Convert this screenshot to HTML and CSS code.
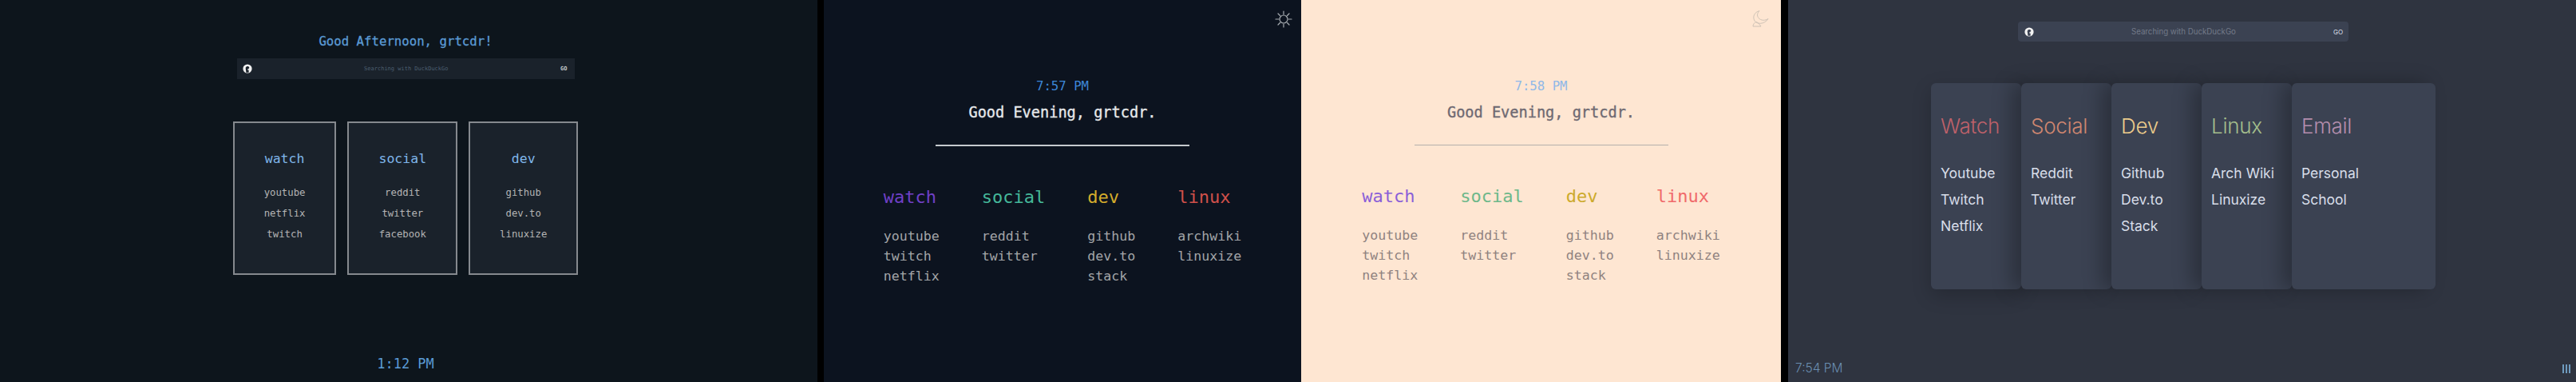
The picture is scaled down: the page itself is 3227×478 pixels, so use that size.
FILE: index.html
```html
<html>
<head>
  <title>Startpages</title>
  <link rel="stylesheet" href="styles.css">
</head>
<body>
  <section class="term">
    <h1 class="term-greeting">Good Afternoon, grtcdr!</h1>
    <div class="search term-search">
      <svg class="duck" viewBox="0 0 12 12"><circle cx="6" cy="6" r="5.6" fill="#f2f2f2"/><path d="M4.2 10.8 C4.6 8.4 3.4 6.6 3.8 4.6 C4.2 3 6.4 2.4 7.6 3.4 C8.8 4.4 8.2 5.6 7 6 C7.6 7.4 7.8 9.2 7.6 10.8 Z" fill="#1a222b"/><path d="M6 6.4 L8.6 6.2 L8.4 7.4 L6.2 7.6 Z" fill="#f2f2f2"/></svg>
      <span class="search-text">Searching with DuckDuckGo</span>
      <span class="search-go">GO</span>
    </div>
    <div class="term-cards">
      <div class="term-card">
        <h2>watch</h2>
        <a>youtube</a><a>netflix</a><a>twitch</a>
      </div>
      <div class="term-card">
        <h2>social</h2>
        <a>reddit</a><a>twitter</a><a>facebook</a>
      </div>
      <div class="term-card">
        <h2>dev</h2>
        <a>github</a><a>dev.to</a><a>linuxize</a>
      </div>
    </div>
    <div class="term-clock">1:12 PM</div>
  </section>

  <section class="mono mono-dark">
    <svg class="toggle sun" viewBox="0 0 24 24" fill="none" stroke-width="1.2" stroke-linecap="round">
      <circle cx="12" cy="12" r="5"/>
      <path d="M12 2v4M12 18v4M2 12h4M18 12h4M5 5l2.5 2.5M16.5 16.5L19 19M5 19l2.5-2.5M16.5 7.5L19 5"/>
    </svg>
    <div class="mono-clock">7:57 PM</div>
    <h1 class="mono-greeting">Good Evening, grtcdr.</h1>
    <hr class="mono-rule">
    <div class="mono-cols">
      <div class="mono-col">
        <h2 class="c-watch">watch</h2>
        <a>youtube</a><a>twitch</a><a>netflix</a>
      </div>
      <div class="mono-col">
        <h2 class="c-social">social</h2>
        <a>reddit</a><a>twitter</a>
      </div>
      <div class="mono-col">
        <h2 class="c-dev">dev</h2>
        <a>github</a><a>dev.to</a><a>stack</a>
      </div>
      <div class="mono-col">
        <h2 class="c-linux">linux</h2>
        <a>archwiki</a><a>linuxize</a>
      </div>
    </div>
  </section>

  <section class="mono mono-light">
    <svg class="toggle moon" viewBox="0 0 21 21" fill="none" stroke-width="0.9" stroke-linejoin="round">
      <path d="M9 0.7 C3 2 0 8 3 13 C6 17.5 15 18 20 10.5 C16 13 11 13 8 9.5 C5.5 6.5 6.5 3 9 0.7 Z"/>
      <path d="M1 20 C1 17.5 3 15 5 14.5 C7 15 9 17 11 20 Z"/>
    </svg>
    <div class="mono-clock">7:58 PM</div>
    <h1 class="mono-greeting">Good Evening, grtcdr.</h1>
    <hr class="mono-rule">
    <div class="mono-cols">
      <div class="mono-col">
        <h2 class="c-watch">watch</h2>
        <a>youtube</a><a>twitch</a><a>netflix</a>
      </div>
      <div class="mono-col">
        <h2 class="c-social">social</h2>
        <a>reddit</a><a>twitter</a>
      </div>
      <div class="mono-col">
        <h2 class="c-dev">dev</h2>
        <a>github</a><a>dev.to</a><a>stack</a>
      </div>
      <div class="mono-col">
        <h2 class="c-linux">linux</h2>
        <a>archwiki</a><a>linuxize</a>
      </div>
    </div>
  </section>

  <section class="nord">
    <div class="search nord-search">
      <svg class="duck" viewBox="0 0 12 12"><circle cx="6" cy="6" r="5.6" fill="#f2f2f2"/><path d="M4.2 10.8 C4.6 8.4 3.4 6.6 3.8 4.6 C4.2 3 6.4 2.4 7.6 3.4 C8.8 4.4 8.2 5.6 7 6 C7.6 7.4 7.8 9.2 7.6 10.8 Z" fill="#3b4252"/><path d="M6 6.4 L8.6 6.2 L8.4 7.4 L6.2 7.6 Z" fill="#f2f2f2"/></svg>
      <span class="search-text">Searching with DuckDuckGo</span>
      <span class="search-go">GO</span>
    </div>
    <div class="nord-cards">
      <div class="nord-card">
        <h2 class="n-watch">Watch</h2>
        <a>Youtube</a><a>Twitch</a><a>Netflix</a>
      </div>
      <div class="nord-card">
        <h2 class="n-social">Social</h2>
        <a>Reddit</a><a>Twitter</a>
      </div>
      <div class="nord-card">
        <h2 class="n-dev">Dev</h2>
        <a>Github</a><a>Dev.to</a><a>Stack</a>
      </div>
      <div class="nord-card">
        <h2 class="n-linux">Linux</h2>
        <a>Arch Wiki</a><a>Linuxize</a>
      </div>
      <div class="nord-card nord-card-wide">
        <h2 class="n-email">Email</h2>
        <a>Personal</a><a>School</a>
      </div>
    </div>
    <div class="nord-footer">
      <span class="nord-clock">7:54 PM</span>
      <span class="nord-bars"><i></i><i></i><i></i></span>
    </div>
  </section>
</body>
</html>
```

FILE: styles.css
```css
body {
  margin: 0;
  width: 3227px;
  height: 478px;
  overflow: hidden;
  display: flex;
  background-color: #000;
}

h1, h2 {
  margin: 0;
  font-weight: normal;
}

a {
  display: block;
}

.search {
  display: flex;
  align-items: center;
  justify-content: space-between;
  box-sizing: border-box;
}

.duck {
  width: 12px;
  height: 12px;
  flex: none;
}

/* first page */
.term {
  width: 1024px;
  height: 478px;
  margin-right: 8px;
  padding: 40px 8px 0 0;
  box-sizing: border-box;
  display: flex;
  flex-direction: column;
  align-items: center;
  background-color: #0d151c;
  font-family: "DejaVu Sans Mono", monospace;
}

.term-greeting {
  font-size: 15.7px;
  line-height: 24px;
  -webkit-text-stroke: 0.3px #5b9bd5;
  color: #5b9bd5;
}

.term-search {
  width: 423px;
  height: 26px;
  margin-top: 9px;
  padding: 0 9px 0 7px;
  background-color: #1a222b;
  font-size: 7px;
}

.term-search .search-text {
  color: #4d5f70;
}

.term-search .search-go {
  color: #c4c8cc;
  font-size: 7px;
  font-weight: bold;
}

.term-cards {
  display: flex;
  gap: 14px;
  margin-top: 53px;
}

.term-card {
  height: 192px;
  padding: 33px 37px 0;
  box-sizing: border-box;
  border: 2px solid #85898e;
  background-color: #1a222b;
  text-align: center;
}

.term-card h2 {
  font-size: 16.5px;
  line-height: 24px;
  margin-bottom: 17px;
  color: #7fb6ea;
}

.term-card a {
  font-size: 12.3px;
  line-height: 26px;
  color: #b4b4b4;
}

.term-clock {
  margin-top: 99px;
  font-size: 17px;
  line-height: 24px;
  color: #5b9bd5;
}

/* second and third page */
.mono {
  position: relative;
  height: 478px;
  padding-top: 98px;
  box-sizing: border-box;
  display: flex;
  flex-direction: column;
  align-items: center;
  font-family: "DejaVu Sans Mono", monospace;
}

.mono-dark {
  width: 598px;
  background-color: #0c131f;
}

.mono-light {
  width: 601px;
  margin-right: 9px;
  background-color: #fee6d2;
}

.toggle {
  position: absolute;
}

.sun {
  top: 12px;
  right: 10px;
  width: 24px;
  height: 24px;
  stroke: #a6abb0;
}

.moon {
  top: 13px;
  right: 15px;
  width: 21px;
  height: 21px;
  stroke: #c9beb2;
}

.mono-clock {
  font-size: 15.7px;
  line-height: 20px;
}

.mono-greeting {
  margin-top: 10px;
  font-size: 18.6px;
  line-height: 26px;
  -webkit-text-stroke: 0.35px;
}

.mono-rule {
  width: 318px;
  height: 2px;
  margin: 27px 0 0;
  border: none;
}

.mono-cols {
  display: flex;
  gap: 53px;
  margin-top: 49px;
}

.mono-col h2 {
  font-size: 22px;
  line-height: 30px;
  margin-bottom: 21px;
}

.mono-col a {
  font-size: 16.6px;
  line-height: 25px;
}

.mono-dark .mono-clock { color: #3d87d8; }
.mono-dark .mono-greeting { color: #e6e8ea; }
.mono-dark .mono-rule { background-color: #c6cace; }
.mono-dark a { color: #a3a5a8; }
.mono-dark .c-watch { color: #7040c8; }
.mono-dark .c-social { color: #45b89a; }
.mono-dark .c-dev { color: #d4ac2c; }
.mono-dark .c-linux { color: #d0504a; }

.mono-light .mono-clock { color: #8fb8e8; }
.mono-light .mono-greeting { color: #6f6a72; }
.mono-light .mono-rule { background-color: #b4b0ac; height: 1px; }
.mono-light a { color: #8f8280; }
.mono-light .c-watch { color: #8a5fd8; }
.mono-light .c-social { color: #6db88a; }
.mono-light .c-dev { color: #ccaa2c; }
.mono-light .c-linux { color: #f06a6a; }

/* fourth page */
.nord {
  width: 987px;
  height: 478px;
  padding: 27px 0 0 3px;
  box-sizing: border-box;
  display: flex;
  flex-direction: column;
  align-items: center;
  background-color: #2f3440;
  font-family: "Inter", sans-serif;
}

.nord-search {
  width: 414px;
  height: 25px;
  padding: 0 7px 0 8px;
  border-radius: 4px;
  background-color: #3b4252;
}

.nord-search .search-text {
  font-size: 9.7px;
  color: #737a89;
}

.nord-search .search-go {
  font-size: 8px;
  color: #d8dee9;
}

.nord-cards {
  display: flex;
  margin-top: 52px;
}

.nord-card {
  width: 113px;
  height: 258px;
  padding: 36px 0 0 12px;
  box-sizing: border-box;
  border-radius: 6px;
  background-color: #3b4252;
  box-shadow: -12px 0 24px rgba(0, 0, 0, 0.28);
}

.nord-card:first-child {
  box-shadow: 0 8px 24px rgba(0, 0, 0, 0.2);
}

.nord-card-wide {
  width: 180px;
}

.nord-card h2 {
  font-size: 26px;
  line-height: 36px;
  margin-bottom: 24px;
  font-weight: 300;
  letter-spacing: -0.3px;
}

.nord-card a {
  font-size: 17.5px;
  line-height: 33px;
  color: #d8dee9;
}

.n-watch { color: #bf616a; }
.n-social { color: #d08770; }
.n-dev { color: #ebcb8b; }
.n-linux { color: #a3be8c; }
.n-email { color: #b48ead; }

.nord-footer {
  align-self: stretch;
  margin-top: auto;
  padding: 0 7px 7px 6px;
  display: flex;
  align-items: center;
  justify-content: space-between;
}

.nord-clock {
  font-size: 15.5px;
  line-height: 20px;
  font-weight: 300;
  color: #6b8fb0;
}

.nord-bars {
  display: flex;
  gap: 2px;
}

.nord-bars i {
  width: 2px;
  height: 11px;
  background-color: #6f9bbf;
}
```
